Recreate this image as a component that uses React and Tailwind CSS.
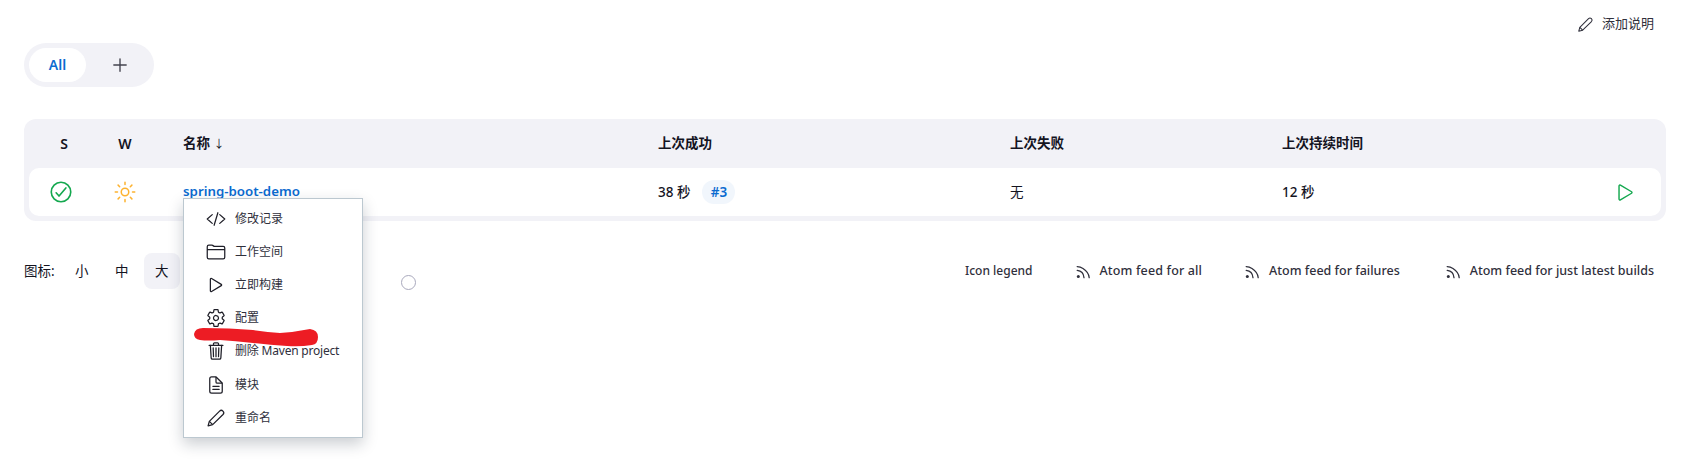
import {
  IoAddOutline,
  IoCheckmarkCircleOutline,
  IoCodeSlashOutline,
  IoDocumentTextOutline,
  IoFolderOutline,
  IoPlayOutline,
  IoSettingsOutline,
  IoSunnyOutline,
  IoTrashOutline,
} from "react-icons/io5";

function PencilIcon({ className }) {
  return (
    <svg viewBox="0 0 24 24" fill="none" stroke="currentColor" strokeWidth="1.5" strokeLinejoin="round" className={className}>
      <path d="M2.5 21.500l1.500-5.500L16.300 3.700a2.900 2.900 0 0 1 4.100 4.100L8 20z" />
      <path d="M4 16l4 4" />
    </svg>
  );
}

const menuItems = [
  { icon: IoCodeSlashOutline, label: "修改记录" },
  { icon: IoFolderOutline, label: "工作空间" },
  { icon: IoPlayOutline, label: "立即构建" },
  { icon: IoSettingsOutline, label: "配置" },
  { icon: IoTrashOutline, label: "删除 Maven project", latin: true },
  { icon: IoDocumentTextOutline, label: "模块" },
  { icon: PencilIcon, label: "重命名" },
];

function RssIcon() {
  return (
    <svg viewBox="0 0 16 16" fill="none" stroke="currentColor" strokeWidth="1.3" strokeLinecap="round" className="h-4 w-4 text-[#30303c]">
      <circle cx="2.300" cy="13.500" r="1.500" fill="currentColor" stroke="none" />
      <path d="M1.200 7.400c3.900 .4 6.500 3.300 6.800 7.300" />
      <path d="M1.200 3.600c2.200 .1 4 .7 5.800 1.900c3.200 2.100 6 5.200 6.200 9.200" />
    </svg>
  );
}

function FeedLink({ label, className }) {
  return (
    <div className={`flex items-center gap-[8px] ${className || ""}`}>
      <RssIcon />
      <span>{label}</span>
    </div>
  );
}

export default function App() {
  return (
    <div className="relative h-[475px] overflow-hidden bg-white px-6 text-[13.5px] text-[#14141f] font-['Noto_Sans','Noto_Sans_CJK_SC',sans-serif]">
      <header className="flex h-[43px] items-center justify-end gap-[8px] pr-[12px] pt-[5px] text-[13px] text-[#30303c]">
        <PencilIcon className="h-[17px] w-[17px]" />
        <span>添加说明</span>
      </header>

      <div className="flex h-[44px] w-[130px] items-center rounded-[22px] bg-[#f2f2f7] pl-[5px]">
        <div className="flex h-[34px] w-[57px] items-center justify-center rounded-[17px] bg-white pb-[2px] text-[14px] font-semibold text-[#0b6bd0]">
          All
        </div>
        <div className="flex flex-1 items-center justify-center text-[#44444f]">
          <IoAddOutline className="text-[22px]" />
        </div>
      </div>

      <div className="mt-[32px] rounded-[12px] bg-[#f2f2f7] px-[5px] pb-[5px]">
        <div className="grid h-[49px] grid-cols-[68px_56px_505px_352px_272px_1fr] items-center font-semibold">
          <div className="pl-[2px] text-center text-[14px]">S</div>
          <div className="text-center text-[14px]">W</div>
          <div className="pl-[30px]">
            名称 <span className="text-[11px] font-normal">↓</span>
          </div>
          <div>上次成功</div>
          <div>上次失败</div>
          <div>上次持续时间</div>
        </div>
        <div className="grid h-[48px] grid-cols-[68px_56px_505px_352px_272px_1fr] items-center rounded-[10px] bg-white">
          <div className="flex justify-center pr-[4px] text-[#14a84f]">
            <IoCheckmarkCircleOutline className="text-[26px]" />
          </div>
          <div className="flex justify-center text-[#fdb22f]">
            <IoSunnyOutline className="text-[24px]" />
          </div>
          <div className="pl-[30px] text-[13.300px] font-semibold text-[#0b6bd0]">spring-boot-demo</div>
          <div className="flex items-center gap-[12px]">
            <span className="font-medium">38 秒</span>
            <span className="flex h-[24px] w-[33px] items-center justify-center rounded-[12px] bg-[#f1f6fc] font-semibold text-[#0b6bd0]">
              #3
            </span>
          </div>
          <div>无</div>
          <div className="flex items-center justify-between pr-[24px]">
            <span className="font-medium">12 秒</span>
            <IoPlayOutline className="text-[23px] text-[#14a84f]" />
          </div>
        </div>
      </div>

      <footer className="mt-[32px] flex h-[36px] items-center">
        <span className="mr-[9px]">图标:</span>
        <div className="flex gap-[4px]">
          <div className="flex h-[36px] w-[36px] items-center justify-center rounded-[8px]">小</div>
          <div className="flex h-[36px] w-[36px] items-center justify-center rounded-[8px]">中</div>
          <div className="flex h-[36px] w-[36px] items-center justify-center rounded-[8px] bg-[#f2f2f7]">大</div>
        </div>
        <div className="ml-auto flex items-center gap-[43px] pr-[12px] text-[12.5px] font-medium text-[#30303c]">
          <span className="text-[12px]">Icon legend</span>
          <FeedLink label="Atom feed for all" className="tracking-[0.15px]" />
          <FeedLink label="Atom feed for failures" />
          <FeedLink label="Atom feed for just latest builds" className="ml-[3px]" />
        </div>
      </footer>

      {/* stray radio sitting behind the dropdown */}
      <div className="absolute left-[401px] top-[275px] h-[15px] w-[15px] rounded-full border border-[#a9a9bd] bg-white"></div>

      <div className="absolute left-[183px] top-[198px] w-[180px] border border-[#bcc8d0] bg-white py-[3px] text-[12px] shadow-[0_6px_14px_rgba(20,30,50,0.22)]">
        {menuItems.map((item) => {
          const Icon = item.icon;
          return (
            <div key={item.label} className={`flex h-[33.2px] items-center gap-[9px] pl-[22px] text-[#30303c] ${item.latin ? "tracking-[-0.2px]" : ""}`}>
              <Icon className="h-[20px] w-[20px] shrink-0 text-[#1f1f28]" />
              <span className="whitespace-nowrap">{item.label}</span>
            </div>
          );
        })}
      </div>

      {/* red marker scribble */}
      <svg className="absolute left-[190px] top-[322px] h-[32px] w-[135px]" viewBox="0 0 135 32">
        <path d="M4 12Q5 6 13 6Q40 6 63 8Q78 10 90 11Q105 10 120 7Q128 8 128 15Q128 22 122 23Q110 25 97 24Q80 23 63 21Q45 19 30 18Q18 19 10 18Q4 17 4 12Z" fill="#ed1c24" />
      </svg>
    </div>
  );
}
